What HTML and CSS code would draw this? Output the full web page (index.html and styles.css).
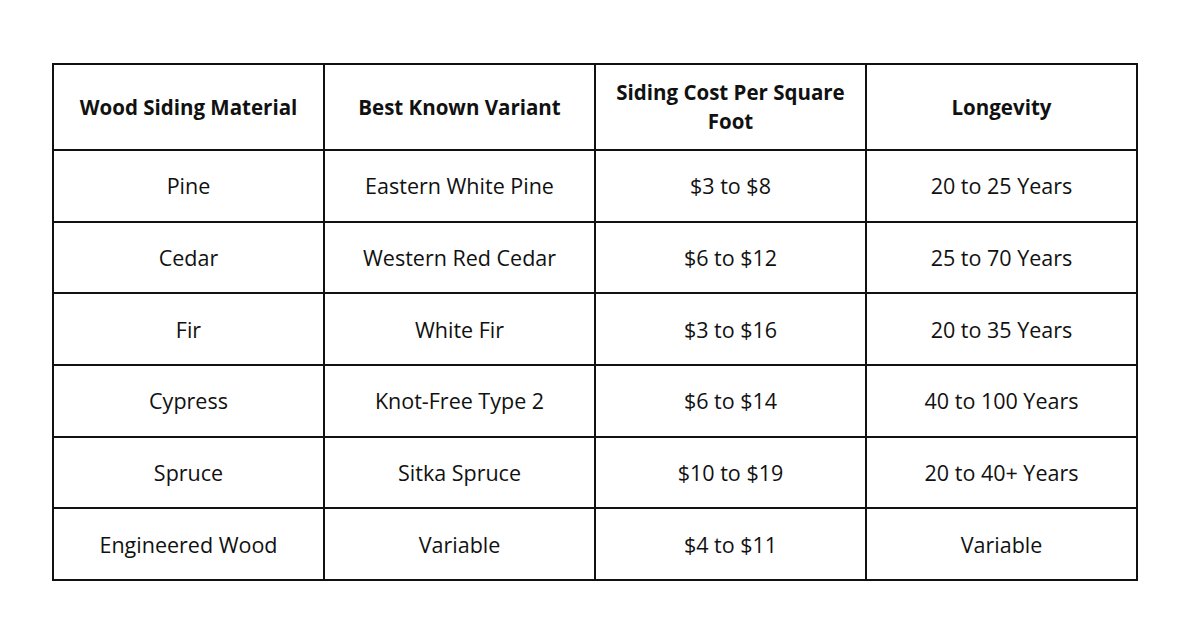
FILE: index.html
```html
<!DOCTYPE html>
<html>
<head>
<meta charset="utf-8">
<link rel="stylesheet" href="styles.css">
</head>
<body>
<div class="page">
<table class="grid">
<thead>
<tr><th>Wood Siding Material</th><th>Best Known Variant</th><th>Siding Cost Per Square Foot</th><th>Longevity</th></tr>
</thead>
<tbody>
<tr><td>Pine</td><td>Eastern White Pine</td><td>$3 to $8</td><td>20 to 25 Years</td></tr>
<tr><td>Cedar</td><td>Western Red Cedar</td><td>$6 to $12</td><td>25 to 70 Years</td></tr>
<tr><td>Fir</td><td>White Fir</td><td>$3 to $16</td><td>20 to 35 Years</td></tr>
<tr><td>Cypress</td><td>Knot-Free Type 2</td><td>$6 to $14</td><td>40 to 100 Years</td></tr>
<tr><td>Spruce</td><td>Sitka Spruce</td><td>$10 to $19</td><td>20 to 40+ Years</td></tr>
<tr><td>Engineered Wood</td><td>Variable</td><td>$4 to $11</td><td>Variable</td></tr>
</tbody>
</table>
</div>
</body>
</html>
```
FILE: styles.css
```css
html, body { margin: 0; padding: 0; background: #ffffff; }
.page {
  width: 1200px;
  height: 630px;
  padding: 63px 0 0 52px;
  box-sizing: border-box;
  font-family: "Open Sans", "Noto Sans", sans-serif;
  color: #111111;
}
.grid {
  border-collapse: collapse;
  width: 1086px;
  table-layout: fixed;
}
.grid th, .grid td {
  border: 2px solid #111111;
  text-align: center;
  vertical-align: middle;
  padding: 0 12px;
  line-height: 29px;
}
.grid th {
  height: 84px;
  font-weight: 700;
  font-size: 20.5px;
}
.grid td {
  height: 69.7px;
  font-weight: 400;
  font-size: 21.5px;
}
```
